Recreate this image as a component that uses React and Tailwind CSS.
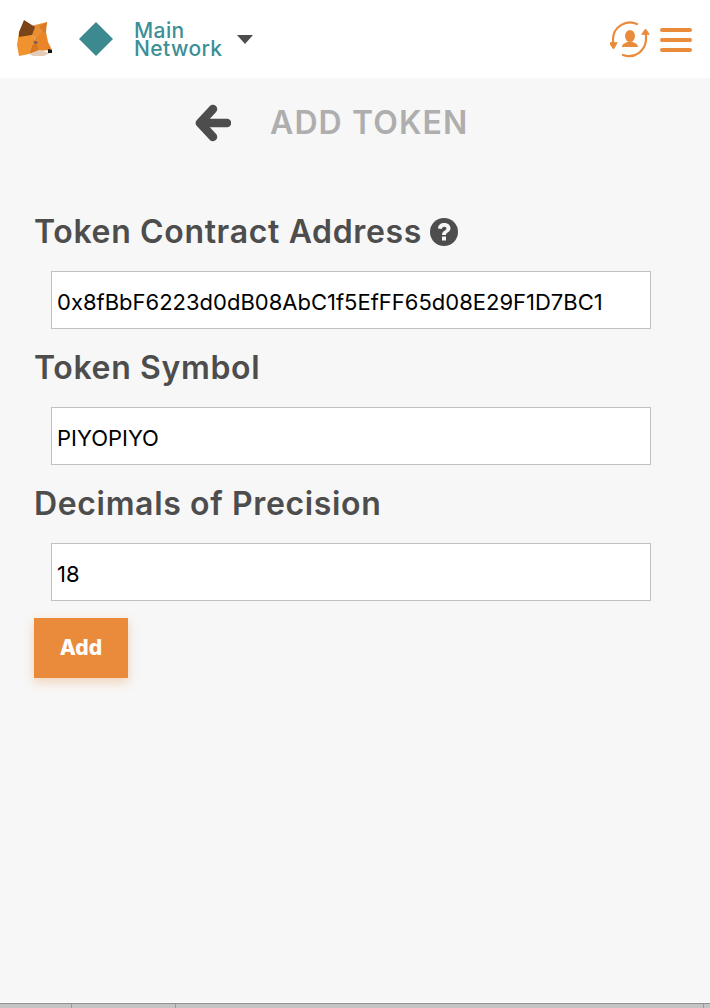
import React from "react";

const FoxLogo = () => (
  <svg width="36" height="38" viewBox="0 0 36 38" className="shrink-0">
    <polygon points="14,6 30,2 28,12 18,18 10,13" fill="#e88f35" />
    <polygon points="22,6 30,2 29,12 26,12" fill="#d97a26" />
    <polygon points="0,25 2,12 10,13 18,18 14,28 12,34 2,36" fill="#f0932f" />
    <polygon points="18,18 26,12 29,12 31,22 35,30 20,31" fill="#ea8428" />
    <polygon points="14,28 18,18 22,31 12,34" fill="#d9761f" />
    <polygon points="12,34 22,30 33,33 27,36 16,36" fill="#e3cdb9" />
    <polygon points="2,12 7,0 18,7 15,15 8,16 2,17" fill="#7a4318" />
    <polygon points="31,29 35,30 35,33 31,33" fill="#161616" />
    <polygon points="16,21 21,22 19,24" fill="#4a5a6a" />
  </svg>
);

const AccountIcon = () => (
  <svg width="40" height="40" viewBox="0 0 40 40" fill="none" stroke="#ea8b3c" strokeWidth="2.2" strokeLinecap="round">
    <path d="M27 5 A17 17 0 0 0 3 20 V25" />
    <path d="M-0.5 24 L3.5 30 L7 24 Z" fill="#ea8b3c" strokeWidth="1" />
    <path d="M13 36 A17 17 0 0 0 36 20 V14" />
    <path d="M32 15 L35.5 10 L39 15 Z" fill="#ea8b3c" strokeWidth="1" />
    <ellipse cx="20" cy="17" rx="5" ry="6" fill="#ea8b3c" stroke="none" />
    <path d="M12 28 C12 24.5 16 24 18 22.5 H22 C24 24 28 24.5 28 28 Z" fill="#ea8b3c" stroke="none" />
  </svg>
);

const BackArrow = () => (
  <svg width="36" height="38" viewBox="0 0 36 38" fill="none" stroke="#4d4d4d" strokeLinecap="round" strokeLinejoin="round">
    <path d="M18 5 L5 19 L18 33" strokeWidth="8.5" />
    <path d="M6 19 H32" strokeWidth="8.5" />
  </svg>
);

const HelpIcon = () => (
  <svg width="28" height="28" viewBox="0 0 28 28" className="shrink-0">
    <circle cx="14" cy="14" r="14" fill="#4d4d4d" />
    <path d="M8 10.5 C8 7 10.8 5 14.2 5 C18 5 20.5 7.2 20.5 10.3 C20.5 14.3 16 14.3 16 17 H12 C12 12.5 16.5 12.8 16.5 10.5 C16.5 9.4 15.5 8.7 14.2 8.7 C13 8.7 12.2 9.4 11.8 11 Z" fill="#f7f7f7" />
    <rect x="12" y="18.5" width="4" height="4" fill="#f7f7f7" />
  </svg>
);

const fields = [
  { label: "Token Contract Address", value: "0x8fBbF6223d0dB08AbC1f5EfFF65d08E29F1D7BC1", help: true },
  { label: "Token Symbol", value: "PIYOPIYO" },
  { label: "Decimals of Precision", value: "18" },
];

export default function App() {
  return (
    <div className="h-[1008px] flex flex-col bg-[#f7f7f7] font-['Inter',sans-serif] overflow-hidden">
      {/* Header */}
      <div className="h-[78px] bg-white flex items-center pl-[17px] pr-[18px] shrink-0">
        <FoxLogo />
        <div className="ml-[26px] w-[34px] h-[34px] flex items-center justify-center">
          <div className="w-[24px] h-[24px] rotate-45 bg-[#3c8a8f]" />
        </div>
        <div className="ml-[21px] mt-[2px] text-[21px] leading-[18px] font-medium text-[#3c8f96] tracking-[0.4px]">
          <div>Main</div>
          <div>Network</div>
        </div>
        <div className="ml-[15px] w-0 h-0 border-l-[8px] border-r-[8px] border-t-[9px] border-l-transparent border-r-transparent border-t-[#4d4d4d]" />
        <div className="ml-auto flex items-center gap-[10px]">
          <AccountIcon />
          <div className="flex flex-col gap-[6px] w-[32px] mt-[2px]">
            <div className="h-[4px] rounded-full bg-[#ea8b3c]" />
            <div className="h-[4px] rounded-full bg-[#ea8b3c]" />
            <div className="h-[4px] rounded-full bg-[#ea8b3c]" />
          </div>
        </div>
      </div>

      {/* Title */}
      <div className="flex items-center h-[90px] pl-[195px] shrink-0">
        <BackArrow />
        <h2 className="ml-[39px] text-[32px] font-semibold text-[#aeaeae] tracking-[1.1px] whitespace-nowrap">ADD TOKEN</h2>
      </div>

      {/* Form */}
      <div className="pl-[34px] pr-[59px] pt-[40px]">
        {fields.map((f) => (
          <div key={f.label} className="mb-[15px]">
            <div className="flex items-center h-[48px] gap-[8px] text-[32px] font-semibold text-[#4d4d4d] tracking-[0.65px] whitespace-nowrap">
              {f.label}
              {f.help && <HelpIcon />}
            </div>
            <input
              readOnly
              value={f.value}
              className="block mt-[15px] ml-[17px] w-[600px] h-[58px] pl-[5px] pr-[5px] pt-[3px] bg-white border border-[#c0c0c0] text-[22px] text-black outline-none"
            />
          </div>
        ))}
        <button className="block mt-[17px] w-[94px] h-[60px] bg-[#ea8b3c] text-white text-[21px] font-extrabold shadow-[0_4px_10px_rgba(236,140,59,0.35)]">
          Add
        </button>
      </div>

      {/* Edge of the window behind */}
      <div className="mt-auto h-[1px] bg-white" />
      <div className="h-[5px] flex bg-[#c4c4c4] border-t border-[#8f8f8f]">
        <div className="w-[72px] border-r border-[#9a9a9a]" />
        <div className="w-[104px] border-r border-[#9a9a9a]" />
        <div className="w-[528px] border-r border-[#9a9a9a]" />
      </div>
    </div>
  );
}
